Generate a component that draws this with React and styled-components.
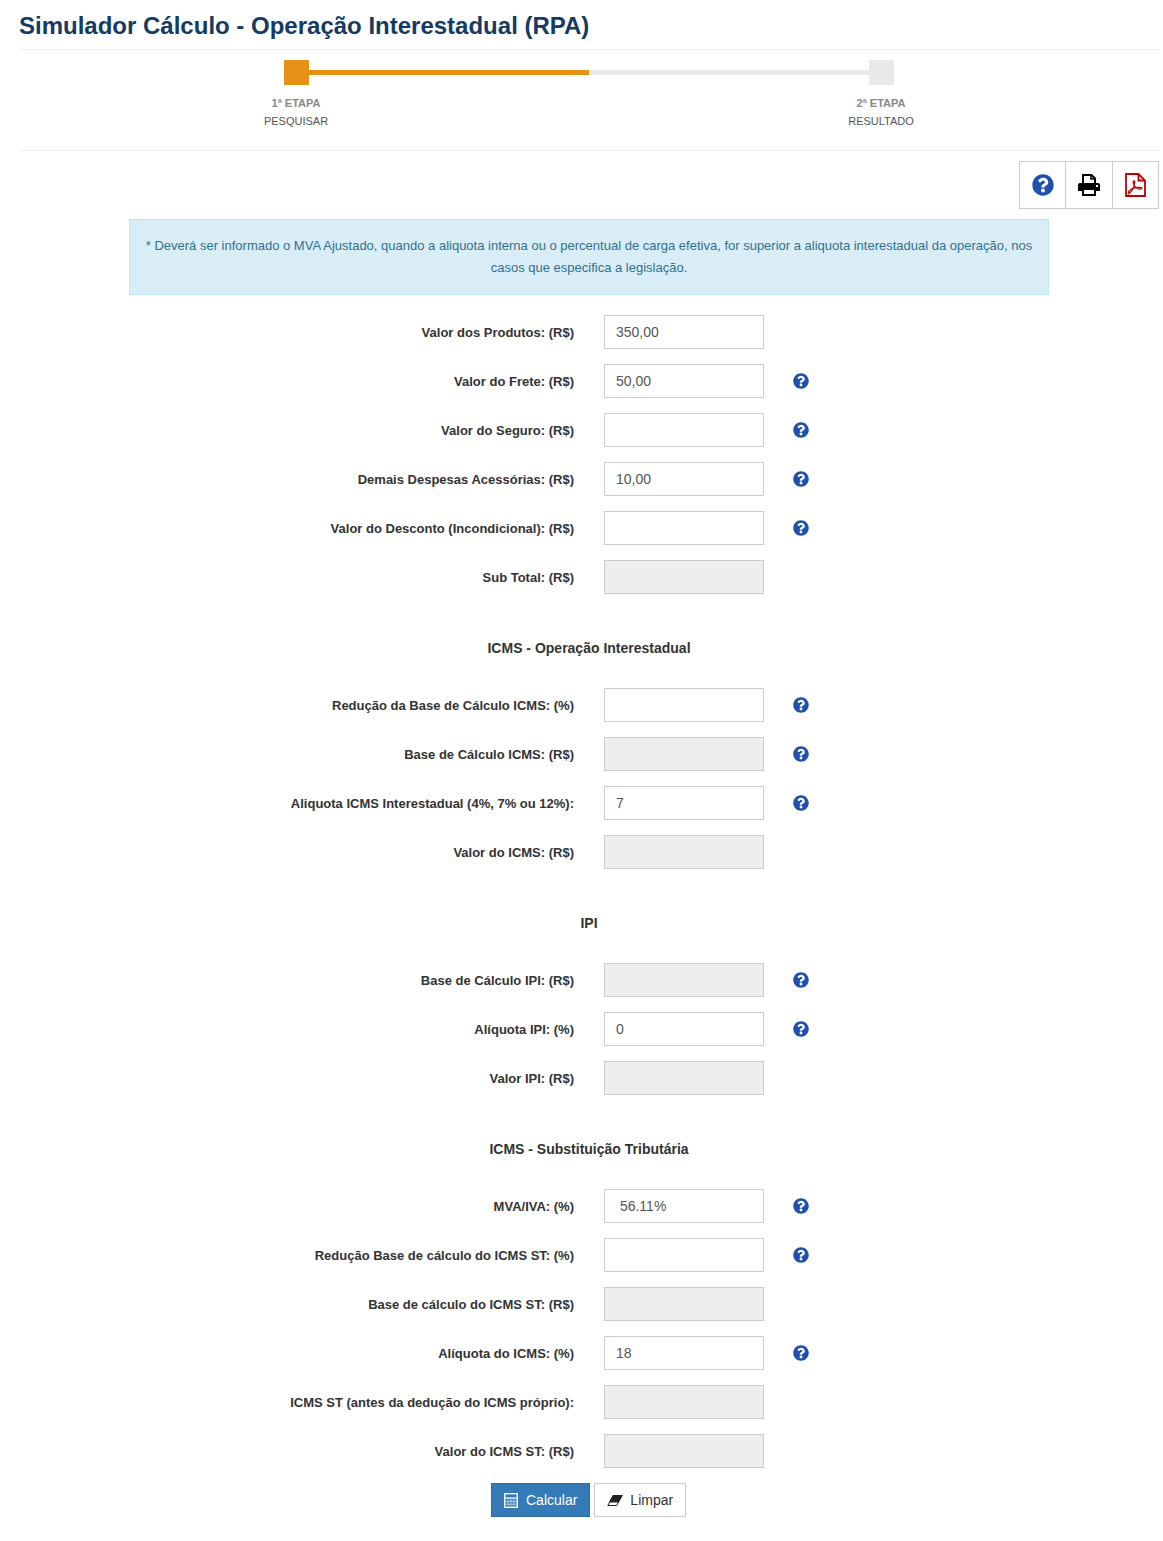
import React from 'react'
import styled, { createGlobalStyle } from 'styled-components'
import { FaQuestionCircle } from 'react-icons/fa'

const GlobalStyle = createGlobalStyle`
    html, body {
        margin: 0;
        padding: 0;
        background: #fff;
    }
    body {
        font-family: "Liberation Sans", Arial, sans-serif;
        font-size: 14px;
        color: #333;
    }
`

const Page = styled('div')`
    box-sizing: border-box;
    height: 1541px;
    padding: 0 3px 0 19px;
`

const TitleBar = styled('div')`
    height: 49px;
    border-bottom: 1px solid #eee;
`

const Title = styled('h1')`
    margin: 0;
    padding-top: 12px;
    font-size: 24px;
    line-height: 28px;
    font-weight: 700;
    color: #153a63;
`

const Stepper = styled('div')`
    box-sizing: border-box;
    height: 101px;
    padding-top: 10px;
    border-bottom: 1px solid #eee;
`

const Track = styled('div')`
    display: flex;
    align-items: center;
    margin-left: 265px;
    width: 610px;
`

const StepSquare = styled('div')`
    width: 25px;
    height: 25px;
    flex: none;
    background: ${p => (p.$active ? '#e89117' : '#e9e9e9')};
`

const TrackLine = styled('div')`
    flex: 1;
    height: 5px;
    background: #e9e9e9;
`

const TrackFill = styled('div')`
    height: 100%;
    background: #e89117;
`

const StepLabels = styled('div')`
    display: flex;
    justify-content: space-between;
    margin-left: 227px;
    width: 685px;
    padding-top: 9px;
`

const StepLabel = styled('div')`
    width: 100px;
    text-align: center;
    font-size: 11px;
    line-height: 18px;
    color: #555;
`

const StepNumber = styled('div')`
    font-weight: 700;
    color: #888;
`

const Toolbar = styled('div')`
    display: flex;
    justify-content: flex-end;
    margin: 10px 1px 10px 0;
`

const ToolButton = styled('div')`
    box-sizing: border-box;
    display: flex;
    align-items: center;
    justify-content: center;
    width: ${p => p.$width}px;
    height: 48px;
    border: 1px solid #ccc;
    margin-left: -1px;
    font-size: 22px;
    color: ${p => p.$color};
`

const Alert = styled('div')`
    box-sizing: border-box;
    width: 920px;
    height: 76px;
    margin-left: 110px;
    padding: 15px 14px;
    background: #d9edf7;
    border: 1px solid #bce8f1;
    color: #31708f;
    font-size: 13px;
    line-height: 22px;
    text-align: center;
`

const Form = styled('div')`
    padding-top: 20px;
`

const Row = styled('div')`
    display: grid;
    grid-template-columns: 555px 160px 1fr;
    column-gap: 30px;
    align-items: center;
    height: 34px;
    margin-bottom: 15px;
`

const Label = styled('label')`
    text-align: right;
    font-weight: 700;
    font-size: 13px;
    color: #333;
    white-space: nowrap;
`

const Input = styled('input')`
    box-sizing: border-box;
    width: 160px;
    height: 34px;
    padding: 6px 11px;
    border: 1px solid #ccc;
    border-radius: 0;
    outline: none;
    font-family: inherit;
    font-size: 14px;
    color: #555;
    background: #fff;
    &:disabled {
        background: #eee;
    }
`

const Help = styled('span')`
    display: flex;
    margin-left: -1px;
    font-size: 16px;
    color: #1f50ae;
`

const SectionTitle = styled('div')`
    width: 1140px;
    margin: 44px 0 30px;
    height: 20px;
    text-align: center;
    font-weight: 700;
    font-size: 14px;
    line-height: 20px;
    color: #333;
`

const Actions = styled('div')`
    display: flex;
    gap: 4px;
    margin-left: 472px;
`

const ActionButton = styled('button')`
    box-sizing: border-box;
    display: flex;
    align-items: center;
    gap: ${p => (p.$primary ? 8 : 7)}px;
    height: 34px;
    padding: 0 12px;
    border: 1px solid ${p => (p.$primary ? '#2e6da4' : '#ccc')};
    border-radius: 0;
    background: ${p => (p.$primary ? '#337ab7' : '#fff')};
    color: ${p => (p.$primary ? '#fff' : '#333')};
    font-family: inherit;
    font-size: 14px;
`

function PrintIcon () {
    return (
        <svg width="22" height="22" viewBox="0 0 22 22">
            <path d="M5 10V1h8.500L17 4.500V10z" fill="#fff" stroke="#000" strokeWidth="2" />
            <path d="M13 1v4h4" fill="none" stroke="#000" strokeWidth="1.500" />
            <path d="M2 9h18a2 2 0 0 1 2 2v6H0v-6a2 2 0 0 1 2-2z" fill="#000" />
            <rect x="18" y="11" width="2" height="2" fill="#fff" />
            <path d="M5 15v6h12v-6z" fill="#fff" stroke="#000" strokeWidth="2" />
        </svg>
    )
}

function PdfIcon () {
    return (
        <svg width="21" height="24" viewBox="0 0 21 24" fill="none" stroke="#c00000">
            <path d="M1 1h12.500L20 7.500V23H1z" strokeWidth="1.800" />
            <path d="M13.500 1v6.500H20" strokeWidth="1.800" />
            <path d="M4 20.500c2.500-1.500 5-6.500 5.800-11 .3-1.800-1.400-2-1.500-.7-.2 2 1.600 5 3.700 6.500 2 1.200 4.700 1 4.800-.1.100-1-3-1.100-6-.5-3.300.7-6.600 2.300-7.300 4.300-.2.800.5 1.200 1 .5z" strokeWidth="1.300" />
        </svg>
    )
}

function CalculatorIcon () {
    const keys = []
    for (let row = 0; row < 3; row++) {
        for (let col = 0; col < 4; col++) {
            keys.push(<rect key={`${row}-${col}`} x={1.4 + col * 2.9} y={5.6 + row * 2.9} width="2.4" height="2.3" fill="#337ab7" />)
        }
    }
    return (
        <svg width="14" height="15" viewBox="0 0 14 15">
            <rect width="14" height="15" rx="1" fill="#fff" />
            <rect x="1.400" y="1.400" width="11.200" height="3" fill="#337ab7" />
            {keys}
        </svg>
    )
}

function EraserIcon () {
    return (
        <svg width="16" height="11" viewBox="0 0 16 11">
            <path d="M6.300.5H15L9.700 10.500H.8z" fill="#fff" stroke="#222" />
            <path d="M6 0H16L11.500 7.500H1.800z" fill="#222" />
        </svg>
    )
}

const sections = [
    {
        rows: [
            { label: 'Valor dos Produtos: (R$)', value: '350,00' },
            { label: 'Valor do Frete: (R$)', value: '50,00', help: true },
            { label: 'Valor do Seguro: (R$)', help: true },
            { label: 'Demais Despesas Acessórias: (R$)', value: '10,00', help: true },
            { label: 'Valor do Desconto (Incondicional): (R$)', help: true },
            { label: 'Sub Total: (R$)', disabled: true },
        ],
    },
    {
        title: 'ICMS - Operação Interestadual',
        rows: [
            { label: 'Redução da Base de Cálculo ICMS: (%)', help: true },
            { label: 'Base de Cálculo ICMS: (R$)', disabled: true, help: true },
            { label: 'Aliquota ICMS Interestadual (4%, 7% ou 12%):', value: '7', help: true },
            { label: 'Valor do ICMS: (R$)', disabled: true },
        ],
    },
    {
        title: 'IPI',
        rows: [
            { label: 'Base de Cálculo IPI: (R$)', disabled: true, help: true },
            { label: 'Alíquota IPI: (%)', value: '0', help: true },
            { label: 'Valor IPI: (R$)', disabled: true },
        ],
    },
    {
        title: 'ICMS - Substituição Tributária',
        rows: [
            { label: 'MVA/IVA: (%)', value: ' 56.11%', help: true },
            { label: 'Redução Base de cálculo do ICMS ST: (%)', help: true },
            { label: 'Base de cálculo do ICMS ST: (R$)', disabled: true },
            { label: 'Alíquota do ICMS: (%)', value: '18', help: true },
            { label: 'ICMS ST (antes da dedução do ICMS próprio):', disabled: true },
            { label: 'Valor do ICMS ST: (R$)', disabled: true },
        ],
    },
]

function FormRow ({ label, value, disabled, help }) {
    return (
        <Row>
            <Label>{label}</Label>
            <Input defaultValue={value || ''} disabled={disabled} />
            {help ? <Help><FaQuestionCircle /></Help> : <span />}
        </Row>
    )
}

function App () {
    return (
        <>
        <GlobalStyle />
        <Page>
            <TitleBar>
                <Title>Simulador Cálculo - Operação Interestadual (RPA)</Title>
            </TitleBar>
            <Stepper>
                <Track>
                    <StepSquare $active />
                    <TrackLine>
                        <TrackFill style={{ width: '50%' }} />
                    </TrackLine>
                    <StepSquare />
                </Track>
                <StepLabels>
                    <StepLabel>
                        <StepNumber>1ª ETAPA</StepNumber>
                        PESQUISAR
                    </StepLabel>
                    <StepLabel>
                        <StepNumber>2ª ETAPA</StepNumber>
                        RESULTADO
                    </StepLabel>
                </StepLabels>
            </Stepper>
            <Toolbar>
                <ToolButton $width={47} $color="#1f50ae"><FaQuestionCircle /></ToolButton>
                <ToolButton $width={48} $color="#000"><PrintIcon /></ToolButton>
                <ToolButton $width={47} $color="#c00000"><PdfIcon /></ToolButton>
            </Toolbar>
            <Alert>
                * Deverá ser informado o MVA Ajustado, quando a aliquota interna ou o percentual de carga efetiva, for superior a aliquota interestadual da operação, nos casos que especifica a legislação.
            </Alert>
            <Form>
                {sections.map((section, i) => (
                    <div key={i}>
                        {section.title && <SectionTitle>{section.title}</SectionTitle>}
                        {section.rows.map(row => <FormRow key={row.label} {...row} />)}
                    </div>
                ))}
                <Actions>
                    <ActionButton $primary><CalculatorIcon />Calcular</ActionButton>
                    <ActionButton><EraserIcon />Limpar</ActionButton>
                </Actions>
            </Form>
        </Page>
        </>
    )
}

export default App
